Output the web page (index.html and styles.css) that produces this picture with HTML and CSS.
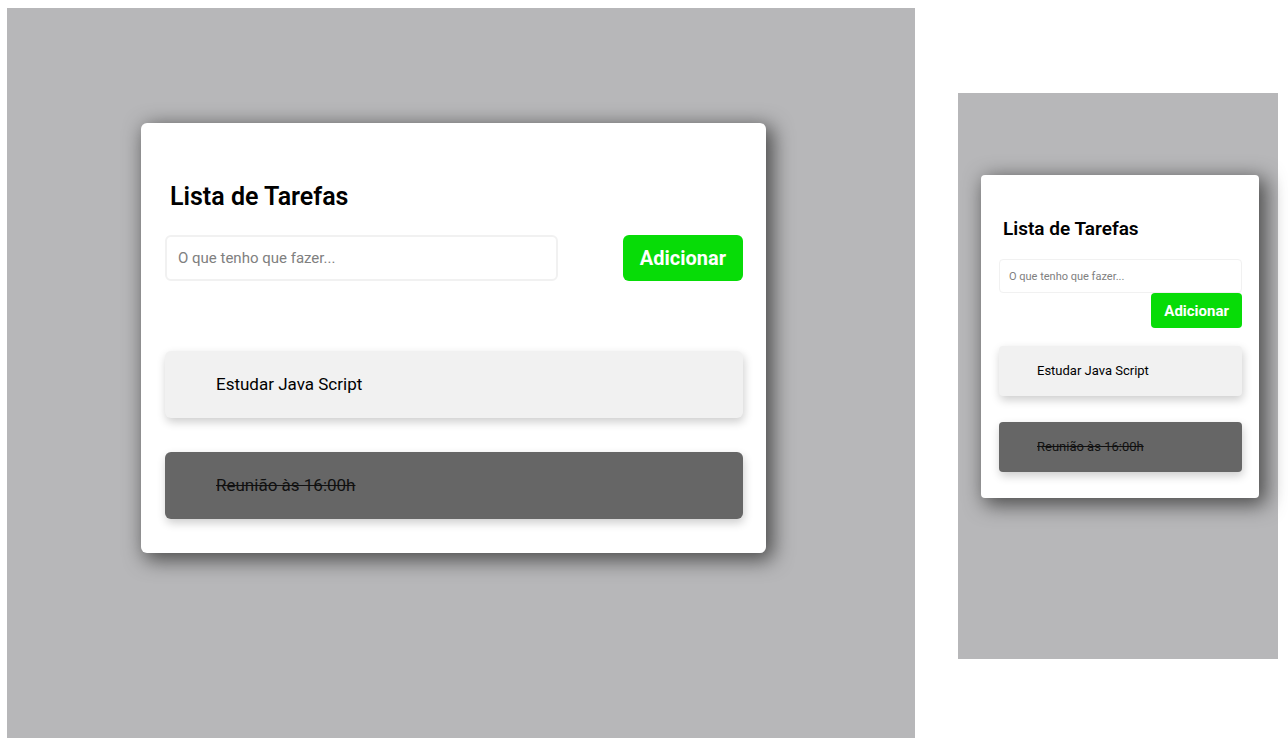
FILE: index.html
```html
<!DOCTYPE html>
<html lang="pt-BR">
<head>
<meta charset="utf-8">
<meta name="viewport" content="width=device-width, initial-scale=1">
<title>Lista de Tarefas</title>
<link rel="stylesheet" href="styles.css">
</head>
<body>
<main class="showcase">
  <section class="screen screen-wide">
    <div class="card">
      <h1 class="title">Lista de Tarefas</h1>
      <form class="task-form">
        <input class="task-input" type="text" aria-label="Nova tarefa" placeholder="O que tenho que fazer...">
        <button class="task-button" type="button">Adicionar</button>
      </form>
      <ul class="tasks">
        <li class="task">Estudar Java Script</li>
        <li class="task task-done">Reunião às 16:00h</li>
      </ul>
    </div>
  </section>
  <section class="screen screen-narrow">
    <div class="card">
      <h1 class="title">Lista de Tarefas</h1>
      <form class="task-form">
        <input class="task-input" type="text" aria-label="Nova tarefa" placeholder="O que tenho que fazer...">
        <button class="task-button" type="button">Adicionar</button>
      </form>
      <ul class="tasks">
        <li class="task">Estudar Java Script</li>
        <li class="task task-done">Reunião às 16:00h</li>
      </ul>
    </div>
  </section>
</main>
</body>
</html>
```

FILE: styles.css
```css
* {
  box-sizing: border-box;
}

body {
  margin: 0;
  background: #fff;
  color: #000;
  font-family: Roboto, "Liberation Sans", sans-serif;
}

.showcase {
  display: grid;
  grid-template-columns: minmax(0, 908fr) minmax(0, 320fr);
  gap: 43px;
  align-items: start;
  padding: 8px 10px 12px 7px;
}

.screen {
  background: #b7b7b9;
}

.screen-wide {
  padding: 115px 149px 185px 134px;
}

.screen-narrow {
  margin-top: 85px;
  padding: 82px 19px 161px 23px;
}

.card {
  padding: 59px 23px 34px 24px;
  border-radius: 6px;
  background: #fff;
  box-shadow: 5px 5px 20px 2px #4c4c4c;
}

.title {
  margin: 0 0 23px;
  padding-left: 5px;
  font-size: 25px;
  font-weight: 600;
  line-height: 30px;
}

.task-form {
  display: flex;
  justify-content: space-between;
  margin-bottom: 70px;
}

.task-input {
  width: 68%;
  height: 46px;
  padding: 0 11px;
  border: 2px solid #f1f1f1;
  border-radius: 6px;
  background: #fff;
  font-family: inherit;
  font-size: 15px;
}

.task-input::placeholder {
  color: #808080;
}

.task-button {
  height: 46px;
  padding: 0 17px;
  border: 0;
  border-radius: 6px;
  background: #07dc07;
  color: #fff;
  font-family: inherit;
  font-size: 20px;
  font-weight: 700;
}

.tasks {
  display: grid;
  gap: 34px;
  margin: 0;
  padding: 0;
  list-style: none;
}

.task {
  padding: 22px 51px 23px;
  border-radius: 6px;
  background: #f1f1f1;
  box-shadow: 1px 4px 10px rgba(0, 0, 0, 0.2);
  font-size: 17px;
  line-height: 22px;
}

.task-done {
  background: #666;
  color: #111;
  text-decoration: line-through;
}

.screen-narrow .card {
  padding: 43px 17px 26px 18px;
  border-radius: 4px;
}

.screen-narrow .title {
  margin-bottom: 19px;
  padding-left: 4px;
  font-size: 19px;
  line-height: 22px;
}

.screen-narrow .task-form {
  flex-direction: column;
  align-items: flex-end;
  margin-bottom: 18px;
}

.screen-narrow .task-input {
  width: 100%;
  height: 34px;
  padding: 0 9px;
  border-width: 1px;
  border-radius: 4px;
  font-size: 11px;
}

.screen-narrow .task-button {
  height: 35px;
  padding: 0 13px;
  border-radius: 4px;
  font-size: 15px;
}

.screen-narrow .tasks {
  gap: 26px;
}

.screen-narrow .task {
  padding: 16px 38px;
  border-radius: 4px;
  font-size: 13px;
  line-height: 18px;
}
```
